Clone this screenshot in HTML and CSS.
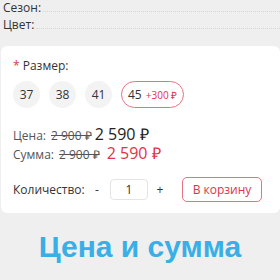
FILE: index.html
```html
<!DOCTYPE html>
<html lang="ru">

<head>
    <meta charset="UTF-8">
    <meta name="viewport" content="width=device-width, initial-scale=1.0">
    <title>Цена и сумма</title>
    <link rel="stylesheet" href="styles.css">
</head>

<body>
    <div class="props">
        <div class="prop"><span class="prop-name">Сезон:</span><span class="prop-dots"></span></div>
        <div class="prop"><span class="prop-name">Цвет:</span><span class="prop-dots"></span></div>
    </div>

    <div class="card">
        <div class="size-label"><span class="required">*</span> Размер:</div>
        <div class="sizes">
            <button class="size">37</button>
            <button class="size">38</button>
            <button class="size">41</button>
            <button class="size active">45 <span class="extra">+300 ₽</span></button>
        </div>

        <div class="prices">
            <div class="price-row">
                <span class="price-label">Цена:</span>
                <span class="old-price">2 900 ₽</span>
                <span class="price">2 590 ₽</span>
            </div>
            <div class="price-row">
                <span class="price-label">Сумма:</span>
                <span class="old-price">2 900 ₽</span>
                <span class="price total">2 590 ₽</span>
            </div>
        </div>

        <div class="buy-row">
            <span class="qty-label">Количество:</span>
            <button class="qty-btn">-</button>
            <input class="qty-input" type="text" value="1">
            <button class="qty-btn">+</button>
            <button class="cart-btn">В корзину</button>
        </div>
    </div>

    <h1 class="caption">Цена и сумма</h1>
</body>

</html>
```

FILE: styles.css
```css
:root {
    --bg: #efefef;
    --card: #ffffff;
    --text: #333333;
    --muted: #555555;
    --red: #e0334a;
    --red-border: #e57383;
    --pill: #f3f3f3;
    --blue: #3aaee6;
}

body {
    margin: 0;
    background: var(--bg);
    font-family: "Open Sans", sans-serif;
    font-size: 12px;
    color: var(--text);
}

.props {
    padding: 0 0 0 3px;
}

.prop {
    display: flex;
    align-items: baseline;
    height: 17px;
    line-height: 16px;
}

.prop-dots {
    flex: 1;
    border-bottom: 1px dotted #d6d6d6;
    margin-left: 2px;
}

.card {
    background: var(--card);
    margin: 12px 0 0 1px;
    border-radius: 6px;
    padding: 12px 0 11px 12px;
}

.size-label {
    line-height: 16px;
}

.required {
    color: var(--red);
}

.sizes {
    display: flex;
    gap: 9px;
    margin-top: 7px;
}

.size {
    height: 27px;
    min-width: 27px;
    padding: 0;
    border: 1px solid transparent;
    border-radius: 14px;
    background: var(--pill);
    font-family: inherit;
    font-size: 12px;
    color: var(--text);
}

.size.active {
    background: #fff;
    border-color: var(--red-border);
    padding: 0 6px;
}

.extra {
    color: var(--red);
    font-size: 10px;
    margin-left: 1px;
}

.prices {
    margin-top: 17px;
}

.price-row {
    display: flex;
    align-items: baseline;
    height: 19px;
    line-height: 19px;
}

.price-label {
    width: 38px;
    color: var(--muted);
}

.price-row:last-child .price-label {
    width: 46px;
}

.old-price {
    text-decoration: line-through;
    color: var(--muted);
}

.price {
    font-size: 16px;
    margin-left: 3px;
    color: #222;
}

.price.total {
    color: var(--red);
    margin-left: 7px;
}

.buy-row {
    display: flex;
    align-items: center;
    margin-top: 14px;
}

.qty-label {
    width: 78px;
}

.qty-btn {
    border: none;
    background: none;
    font-family: inherit;
    font-size: 12px;
    color: var(--text);
    width: 12px;
    padding: 0;
}

.qty-input {
    width: 38px;
    height: 21px;
    box-sizing: border-box;
    border: 1px solid #e4e4e4;
    border-radius: 4px;
    text-align: center;
    font-family: inherit;
    font-size: 12px;
    color: var(--text);
    margin: 0 6px 0 7px;
}

.cart-btn {
    margin-left: 16px;
    width: 80px;
    height: 25px;
    padding: 0;
    border: 1px solid var(--red-border);
    border-radius: 5px;
    background: #fff;
    font-family: inherit;
    font-size: 12px;
    color: var(--red);
}

.caption {
    margin: 17px 0 0;
    text-align: center;
    font-family: "Liberation Sans", Arial, sans-serif;
    font-size: 30px;
    font-weight: bold;
    color: var(--blue);
}
```
